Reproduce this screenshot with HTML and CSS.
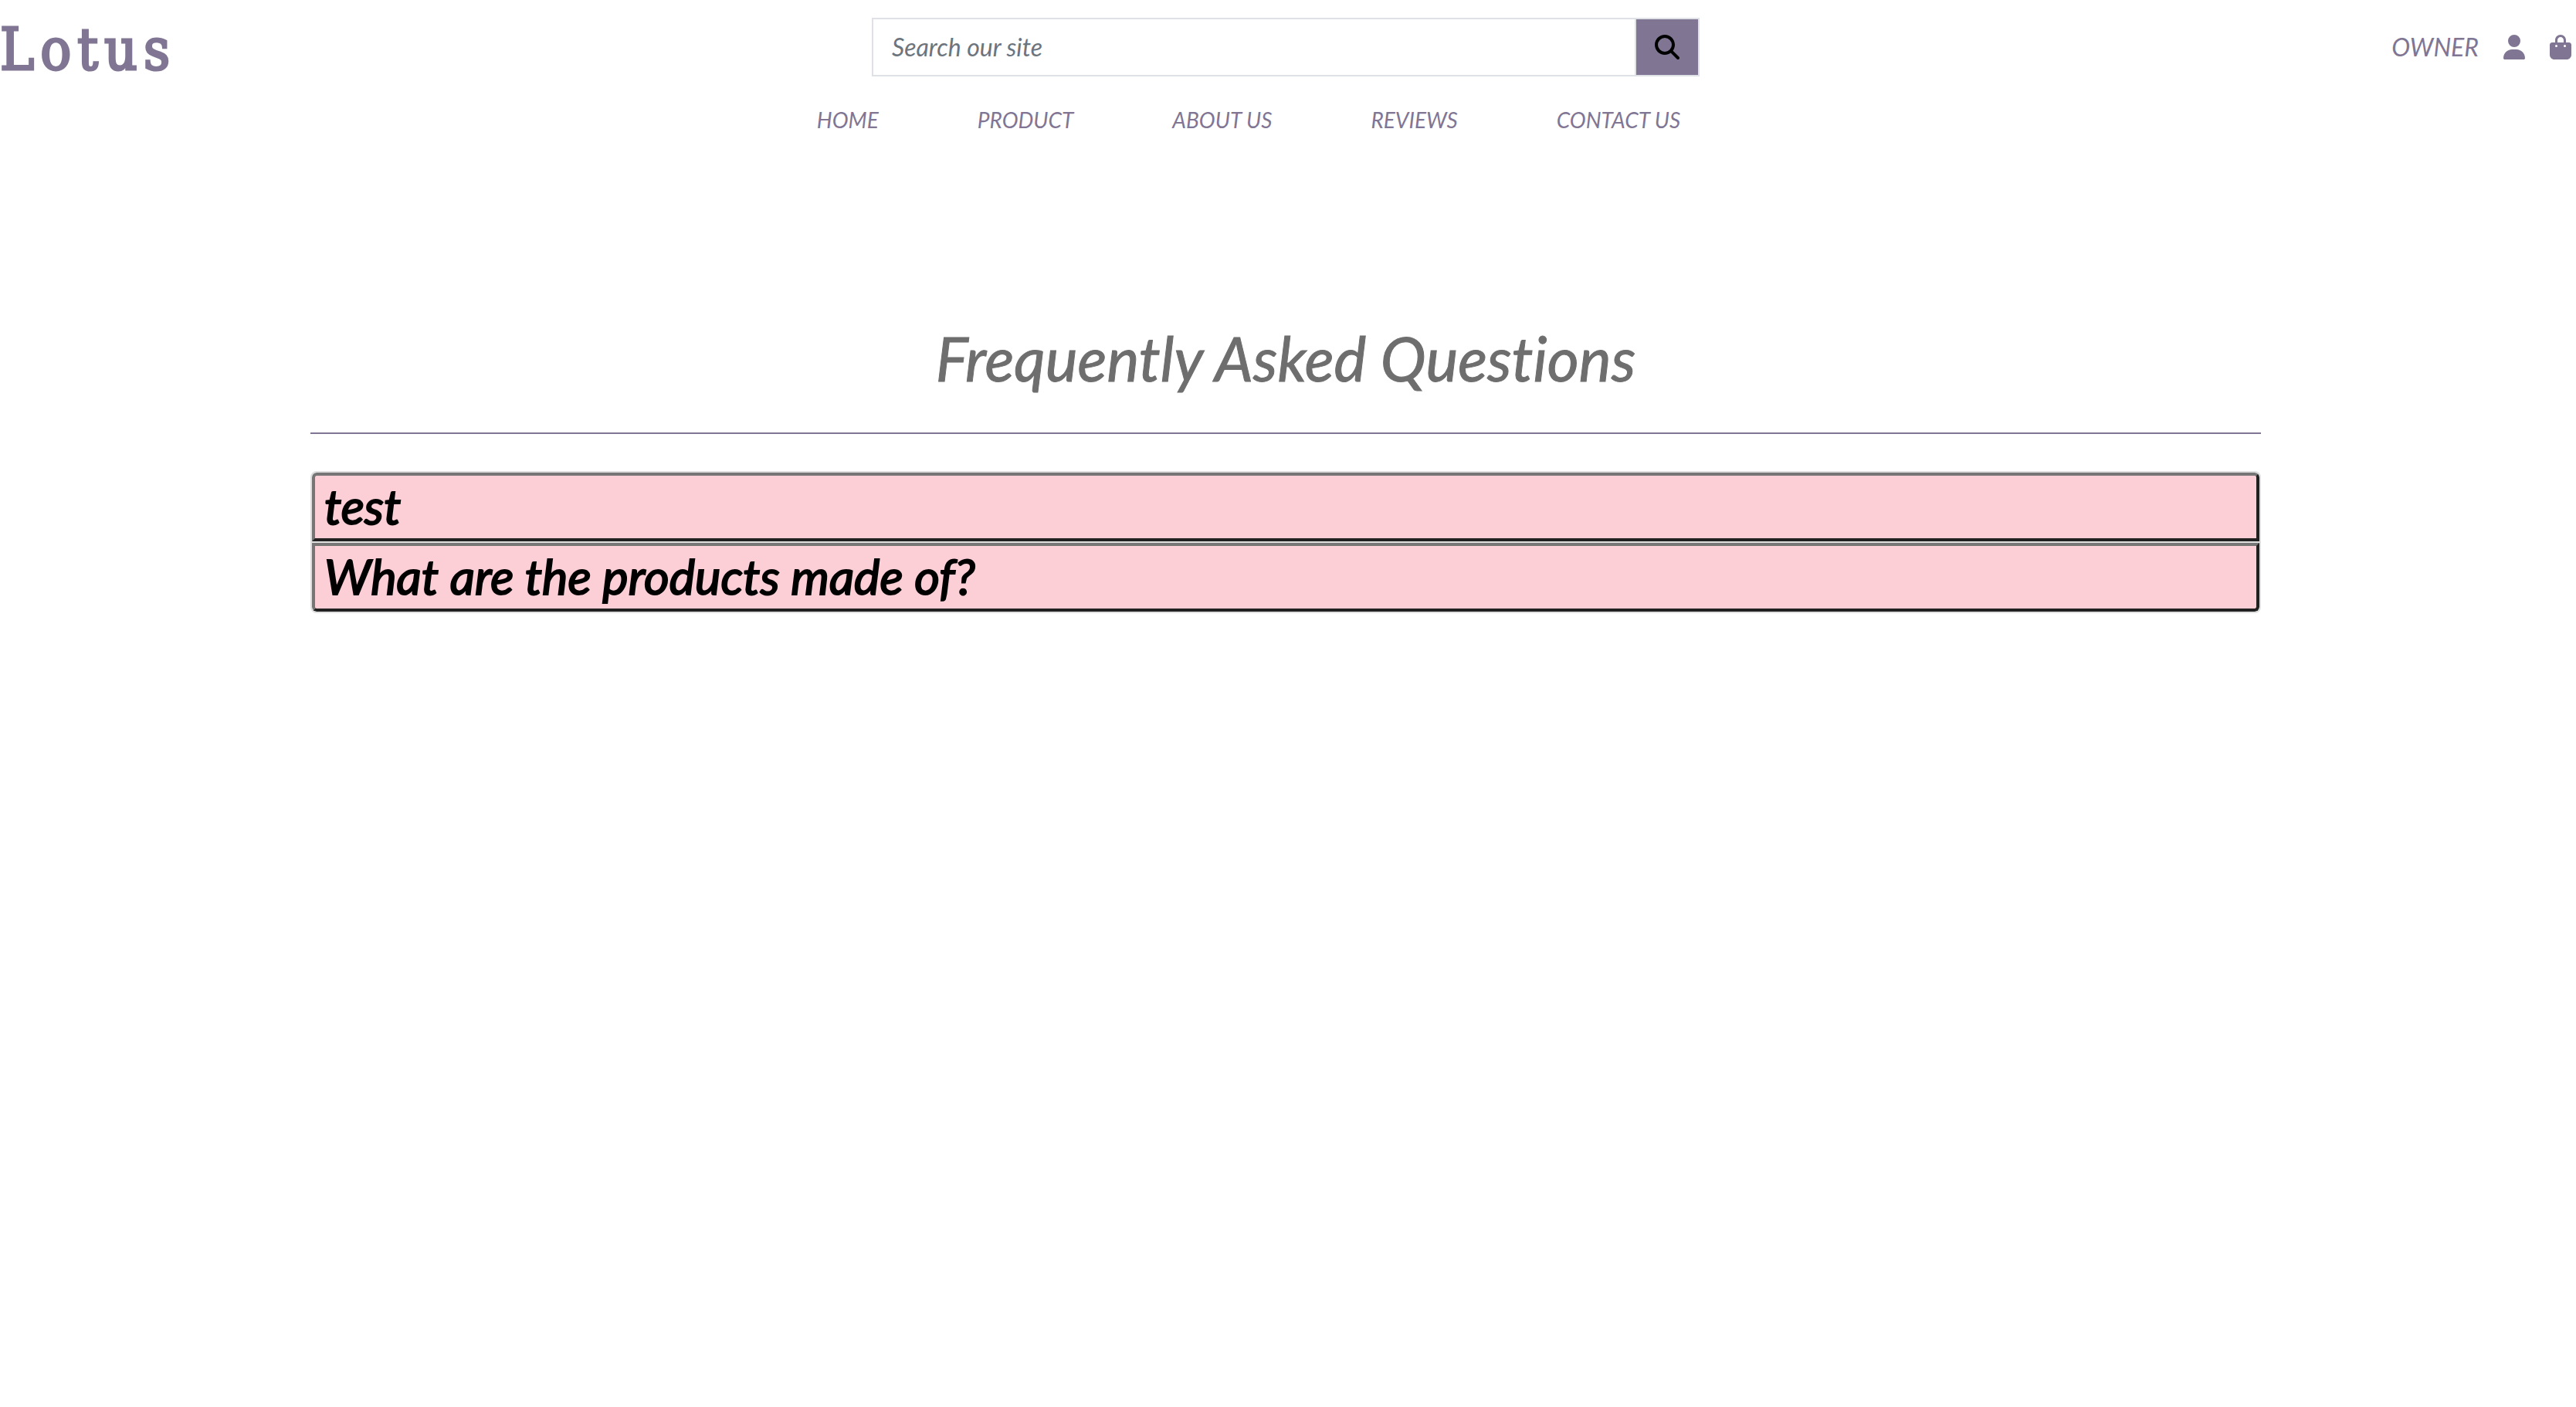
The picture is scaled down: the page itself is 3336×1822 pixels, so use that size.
FILE: index.html
```html
<!DOCTYPE html>
<html lang="en">
<head>
<meta charset="utf-8">
<title>Lotus - Frequently Asked Questions</title>
<link rel="stylesheet" href="styles.css">
</head>
<body>
<header>
  <div class="topbar">
    <a class="logo" href="#">Lotus</a>
    <form class="search" role="search">
      <input class="search-input" type="text" aria-label="Search our site" placeholder="Search our site">
      <button class="search-button" type="button" aria-label="Search">
        <svg class="icon-search" viewBox="0 0 512 512"><path d="M416 208c0 45.900-14.900 88.300-40 122.700L502.600 457.400c12.500 12.500 12.500 32.800 0 45.300s-32.800 12.500-45.300 0L330.700 376c-34.400 25.200-76.800 40-122.700 40C93.100 416 0 322.900 0 208S93.100 0 208 0S416 93.100 416 208zM208 352a144 144 0 1 0 0-288 144 144 0 1 0 0 288z"/></svg>
      </button>
    </form>
    <div class="account">
      <a class="owner" href="#">OWNER</a>
      <a class="account-link" href="#" aria-label="My account">
        <svg class="icon" viewBox="0 0 448 512"><path d="M224 256A128 128 0 1 0 224 0a128 128 0 1 0 0 256zm-45.700 48C79.800 304 0 383.800 0 482.300C0 498.700 13.300 512 29.700 512H418.300c16.400 0 29.700-13.300 29.700-29.700C448 383.800 368.200 304 269.700 304H178.300z"/></svg>
      </a>
      <a class="account-link" href="#" aria-label="Shopping bag">
        <svg class="icon" viewBox="0 0 448 512"><path d="M160 112c0-35.300 28.700-64 64-64s64 28.700 64 64v48H160V112zm-48 48H48c-26.500 0-48 21.500-48 48V416c0 53 43 96 96 96H352c53 0 96-43 96-96V208c0-26.500-21.500-48-48-48H336V112C336 50.100 285.900 0 224 0S112 50.100 112 112v48zm24 48a24 24 0 1 1 0 48 24 24 0 1 1 0-48zm152 24a24 24 0 1 1 48 0 24 24 0 1 1 -48 0z"/></svg>
      </a>
    </div>
  </div>
  <nav class="menu">
    <a href="#">HOME</a>
    <a href="#">PRODUCT</a>
    <a href="#">ABOUT US</a>
    <a href="#">REVIEWS</a>
    <a href="#">CONTACT US</a>
  </nav>
</header>
<main class="faq">
  <h1 class="title">Frequently Asked Questions</h1>
  <hr class="rule">
  <div class="accordion">
    <button class="question" type="button">test</button>
    <button class="question" type="button">What are the products made of?</button>
  </div>
</main>
</body>
</html>
```
FILE: styles.css
```css
* {
  box-sizing: border-box;
}

body {
  margin: 0;
  padding-right: 6px;
  background: #fff;
  color: #807694;
  font-family: Lato, sans-serif;
  font-size: 32px;
  font-style: italic;
  line-height: 48px;
  font-variant-ligatures: none;
}

a {
  color: inherit;
  text-decoration: none;
}

svg {
  display: block;
  fill: currentColor;
}

.topbar {
  display: grid;
  grid-template-columns: repeat(3, 1fr);
  align-items: center;
  height: 122px;
}

.logo {
  padding-top: 6px;
  font-family: "DejaVu Serif Condensed", "DejaVu Serif", serif;
  font-size: 74px;
  font-style: normal;
  line-height: 96px;
  letter-spacing: 8px;
  -webkit-text-stroke: 3px currentColor;
}

.search {
  display: flex;
  height: 76px;
  margin: 0 19px;
}

.search-input {
  flex: 1;
  min-width: 0;
  padding: 0 24px;
  border: 2px solid #dee2e6;
  border-right: 0;
  background: #fff;
  color: #212529;
  font: inherit;
}

.search-input::placeholder {
  color: #6c757d;
  opacity: 1;
}

.search-button {
  display: grid;
  place-items: center;
  width: 84px;
  padding: 0;
  border: 2px solid #dee2e6;
  background: #807694;
  color: #000;
}

.icon-search {
  width: 32px;
  height: 32px;
}

.account {
  display: flex;
  justify-content: flex-end;
  align-items: center;
  gap: 32px;
}

.icon {
  width: 28px;
  height: 32px;
}

.menu {
  display: flex;
  justify-content: center;
  gap: 128px;
  padding-right: 96px;
  font-size: 28px;
  line-height: 66px;
}

.faq {
  max-width: 2526px;
  margin: 0 auto;
  padding-top: 228px;
}

.title {
  margin: 0;
  color: #6e6e6e;
  font-size: 79px;
  font-weight: 400;
  line-height: 96px;
  text-align: center;
  -webkit-text-stroke: 1px currentColor;
}

.rule {
  height: 2px;
  margin: 48px 0;
  border: 0;
  background: #807694;
}

.accordion {
  display: flex;
  flex-direction: column;
  gap: 2px;
  overflow: hidden;
  border: 2px solid #dfdfdf;
  border-radius: 8px;
  background: #dfdfdf;
}

.question {
  padding: 0 12px 4px;
  border: 4px solid;
  border-color: #767676 #212121 #212121 #767676;
  background: #fcced5;
  color: #000;
  font: italic 400 63px/77px Lato, sans-serif;
  text-align: left;
  -webkit-text-stroke: 2px currentColor;
}

.question:first-child {
  border-radius: 6px 6px 0 0;
}

.question:last-child {
  border-radius: 0 0 6px 6px;
}
```
